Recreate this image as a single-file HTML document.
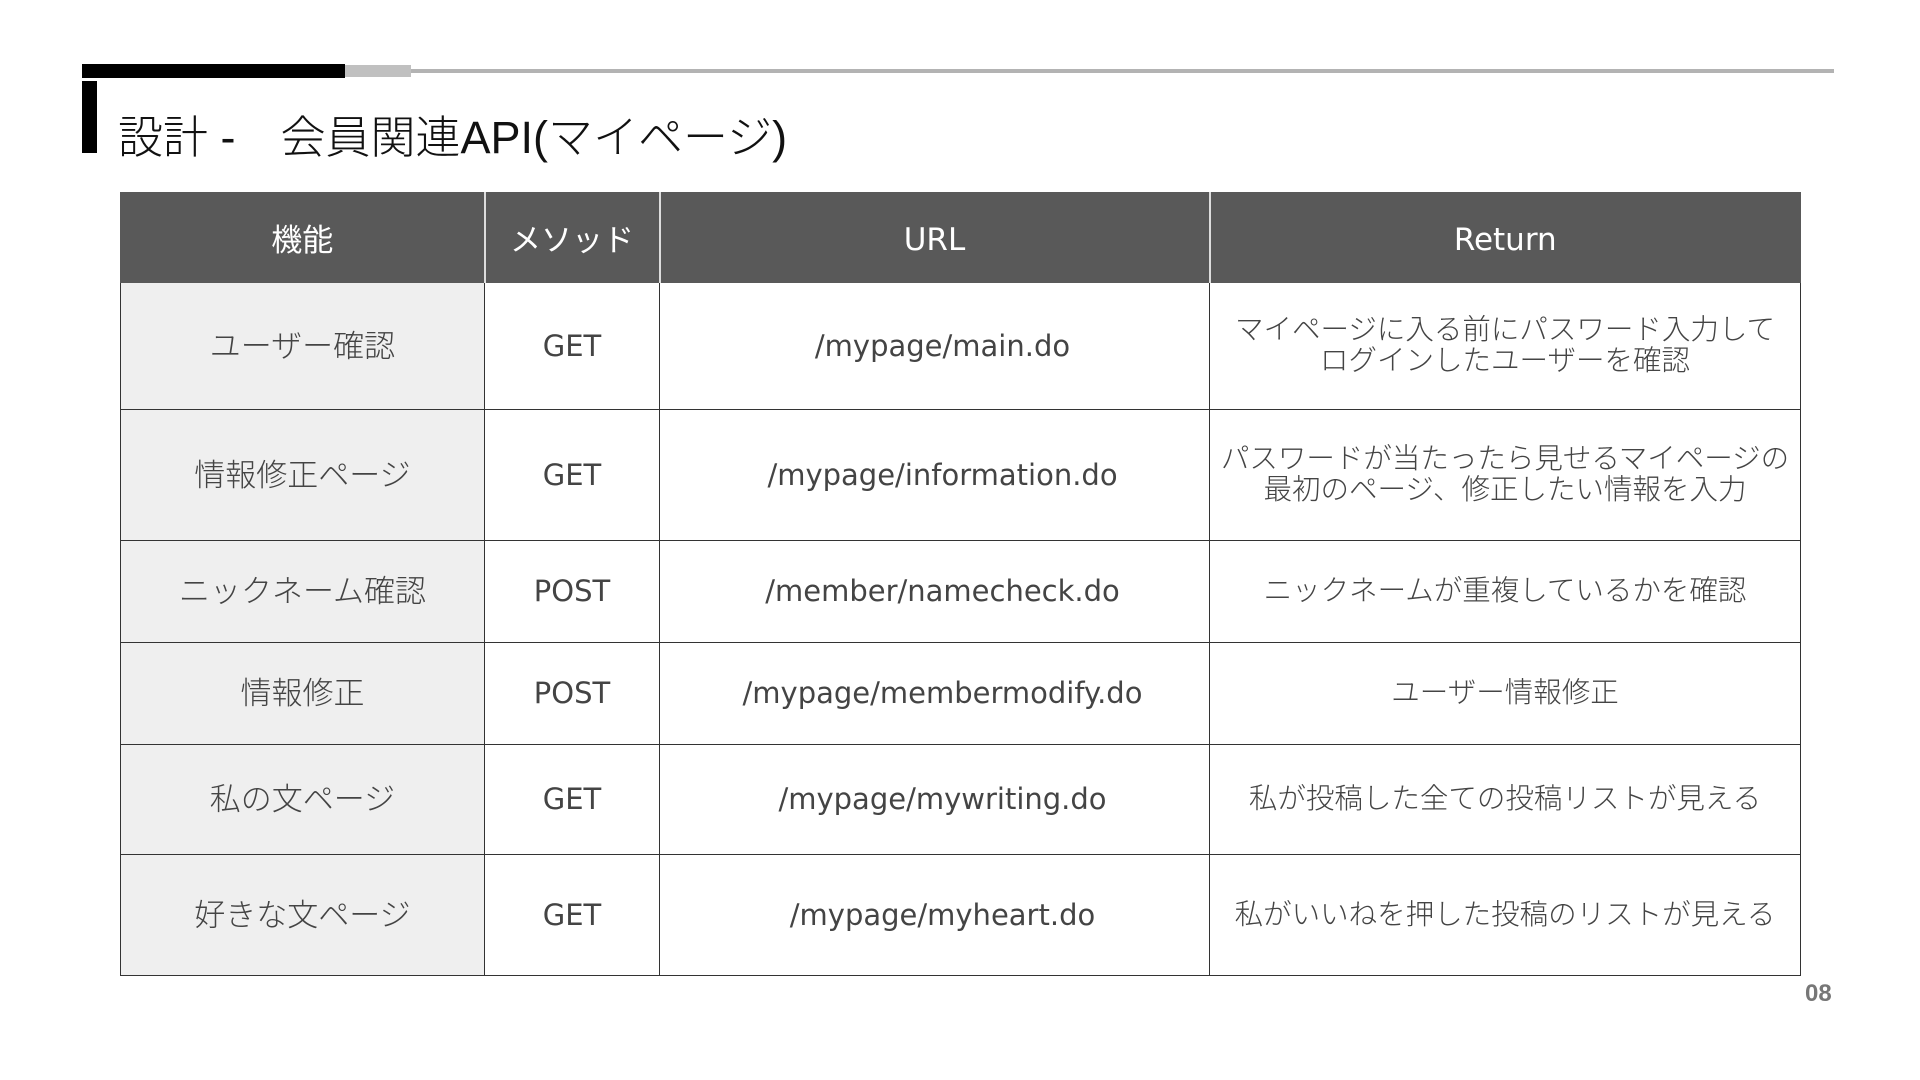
<!DOCTYPE html>
<html><head><meta charset="utf-8"><style>
html,body{margin:0;padding:0;background:#fff;}
body{width:1920px;height:1080px;position:relative;overflow:hidden;font-family:"Liberation Sans","Noto Sans CJK JP",sans-serif;}
.a{position:absolute;}
table{position:absolute;left:120px;top:192px;width:1680px;border-collapse:collapse;table-layout:fixed;}
td,th{border:1.5px solid #333;text-align:center;vertical-align:middle;padding:0 4px;color:#444;font-size:28.5px;font-weight:300;line-height:31px;font-family:"Liberation Sans","Noto Sans CJK JP",sans-serif;}
th{background:#595959;color:#fff;font-weight:400;font-size:31px;border-color:#595959;border-left:2px solid #ddd;height:90px;padding-top:6px;box-sizing:border-box;}
th:first-child{border-left:1.5px solid #595959;}
td.f{background:#efefef;font-size:31px;}
.l{font-family:"DejaVu Sans",sans-serif;font-size:29px;font-weight:normal;color:#444;}
td.u{padding-left:20px;}
th.l{color:#fff;font-size:31px;}
</style></head><body>
<div class="a" style="left:82px;top:64px;width:263px;height:14px;background:#000"></div>
<div class="a" style="left:345px;top:65px;width:66px;height:12px;background:#c0c0c0"></div>
<div class="a" style="left:411px;top:69px;width:1423px;height:4px;background:#b3b3b3"></div>
<div class="a" style="left:82px;top:81px;width:15px;height:72px;background:#000"></div>
<div class="a" style="left:118px;top:112px;font-size:45px;line-height:52px;color:#111;font-family:'Liberation Sans','Noto Sans CJK JP',sans-serif;font-weight:300;">設計 -　会員関連API(マイページ)</div>
<table>
<colgroup><col style="width:364px"><col style="width:175px"><col style="width:550px"><col style="width:591px"></colgroup>
<tr><th>機能</th><th>メソッド</th><th class="l">URL</th><th class="l">Return</th></tr>
<tr style="height:127px"><td class="f">ユーザー確認</td><td class="l">GET</td><td class="l u">/mypage/main.do</td><td>マイページに入る前にパスワード入力して<br>ログインしたユーザーを確認</td></tr>
<tr style="height:131px"><td class="f">情報修正ページ</td><td class="l">GET</td><td class="l u">/mypage/information.do</td><td>パスワードが当たったら見せるマイページの<br>最初のページ、修正したい情報を入力</td></tr>
<tr style="height:102px"><td class="f">ニックネーム確認</td><td class="l">POST</td><td class="l u">/member/namecheck.do</td><td>ニックネームが重複しているかを確認</td></tr>
<tr style="height:102px"><td class="f">情報修正</td><td class="l">POST</td><td class="l u">/mypage/membermodify.do</td><td>ユーザー情報修正</td></tr>
<tr style="height:110px"><td class="f">私の文ページ</td><td class="l">GET</td><td class="l u">/mypage/mywriting.do</td><td>私が投稿した全ての投稿リストが見える</td></tr>
<tr style="height:121px"><td class="f">好きな文ページ</td><td class="l">GET</td><td class="l u">/mypage/myheart.do</td><td>私がいいねを押した投稿のリストが見える</td></tr>
</table>
<div class="a" style="left:1805px;top:980px;font-size:24px;font-weight:bold;color:#777;">08</div>
</body></html>
